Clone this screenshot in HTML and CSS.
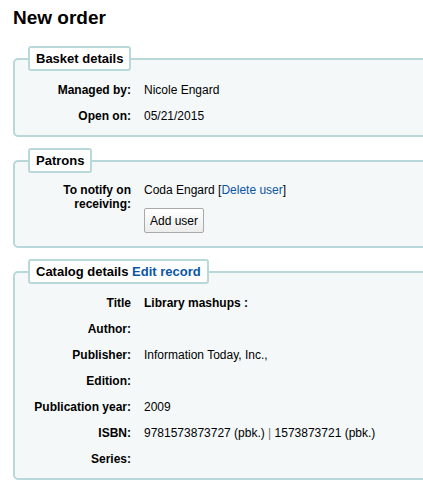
FILE: index.html
```html
<!DOCTYPE html>
<html>
<head>
<meta charset="utf-8">
<link rel="stylesheet" href="styles.css">
</head>
<body>
<div class="page">
  <h1 class="title">New order</h1>

  <fieldset class="box">
    <legend class="legend">Basket details</legend>
    <ol class="rows">
      <li class="row"><span class="label">Managed by:</span><span class="value">Nicole Engard</span></li>
      <li class="row"><span class="label">Open on:</span><span class="value">05/21/2015</span></li>
    </ol>
  </fieldset>

  <fieldset class="box">
    <legend class="legend">Patrons</legend>
    <ol class="rows">
      <li class="row row-tall">
        <span class="label">To notify on receiving:</span>
        <div class="value">
          <div>Coda Engard [<a class="link" href="#">Delete user</a>]</div>
          <button class="btn">Add user</button>
        </div>
      </li>
    </ol>
  </fieldset>

  <fieldset class="box">
    <legend class="legend">Catalog details <a class="link" href="#">Edit record</a></legend>
    <ol class="rows">
      <li class="row"><span class="label nocolon">Title</span><span class="value strong">Library mashups :</span></li>
      <li class="row"><span class="label">Author:</span><span class="value"></span></li>
      <li class="row"><span class="label">Publisher:</span><span class="value">Information Today, Inc.,</span></li>
      <li class="row"><span class="label">Edition:</span><span class="value"></span></li>
      <li class="row"><span class="label">Publication year:</span><span class="value">2009</span></li>
      <li class="row"><span class="label">ISBN:</span><span class="value">9781573873727 (pbk.) <span class="sep">|</span> 1573873721 (pbk.)</span></li>
      <li class="row"><span class="label">Series:</span><span class="value"></span></li>
    </ol>
  </fieldset>
</div>
</body>
</html>
```

FILE: styles.css
```css
html, body {
  margin: 0;
  padding: 0;
  overflow: hidden;
  background: #fff;
}
body {
  font-family: "Liberation Sans", Arial, sans-serif;
  font-size: 12px;
  color: #000;
}
.page {
  width: 450px;
  padding: 0 0 0 13px;
}
.title {
  font-size: 19px;
  font-weight: bold;
  margin: 0;
  padding-top: 7px;
  line-height: 22px;
  height: 28px;
}
.box {
  margin: 11px 0 0 0;
  padding: 0 0 6px 0;
  border: 2px solid #b9d8d9;
  border-radius: 5px;
  background: #f4f8f9;
  min-width: 0;
}
.legend {
  margin-left: 13px;
  padding: 4px 6px;
  border: 2px solid #b9d8d9;
  border-radius: 3px;
  background: #fff;
  font-size: 13px;
  font-weight: bold;
  line-height: 13px;
}
.link {
  color: #0b55a5;
  text-decoration: none;
}
.rows {
  list-style: none;
  margin: 0;
  padding: 6px 0 0 0;
}
.row {
  display: flex;
  align-items: baseline;
  height: 26px;
  line-height: 26px;
}
.label {
  width: 116px;
  text-align: right;
  font-weight: bold;
  margin-right: 13px;
  flex: none;
}
.value.strong {
  font-weight: bold;
  font-size: 12px;
}
.sep {
  color: #777;
}
.row-tall {
  height: auto;
  line-height: 14px;
  align-items: flex-start;
  padding-top: 4px;
  padding-bottom: 7px;
}
.btn {
  display: block;
  margin-top: 11px;
  font-family: "Liberation Sans", Arial, sans-serif;
  font-size: 12px;
  height: 25px;
  padding: 0 5px;
  border: 1px solid #a9a9a9;
  border-radius: 2px;
  background: linear-gradient(#ffffff, #ececec);
  color: #000;
}
```
